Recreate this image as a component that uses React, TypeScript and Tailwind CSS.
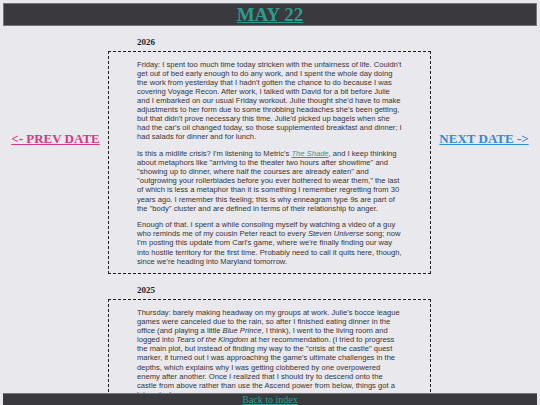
const serif = "font-['Liberation_Serif','Times_New_Roman',serif]";
const sans = "font-['Liberation_Sans',Arial,sans-serif]";

type Entry = { year: string; paragraphs: React.ReactNode[] };

const entries: Entry[] = [
  {
    year: '2026',
    paragraphs: [
      <>
        Friday: I spent too much time today stricken with the unfairness of life. Couldn't get out of bed early
        enough to do any work, and I spent the whole day doing the work from yesterday that I hadn't gotten the
        chance to do because I was covering Voyage Recon. After work, I talked with David for a bit before Julie
        and I embarked on our usual Friday workout. Julie thought she'd have to make adjustments to her form due to
        some throbbing headaches she's been getting, but that didn't prove necessary this time. Julie'd picked up
        bagels when she had the car's oil changed today, so those supplemented breakfast and dinner; I had salads
        for dinner and for lunch.
      </>,
      <>
        Is this a midlife crisis? I'm listening to Metric's{' '}
        <a href="#" className="italic text-[#2a9d8f] underline">
          The Shade
        </a>
        , and I keep thinking about metaphors like "arriving to the theater two hours after showtime" and "showing
        up to dinner, where half the courses are already eaten" and "outgrowing your rollerblades before you ever
        bothered to wear them," the last of which is less a metaphor than it is something I remember regretting
        from 30 years ago. I remember this feeling; this is why enneagram type 9s are part of the "body" cluster
        and are defined in terms of their relationship to anger.
      </>,
      <>
        Enough of that. I spent a while consoling myself by watching a video of a guy who reminds me of my cousin
        Peter react to every <i>Steven Universe</i> song; now I'm posting this update from Carl's game, where we're
        finally finding our way into hostile territory for the first time. Probably need to call it quits here,
        though, since we're heading into Maryland tomorrow.
      </>,
    ],
  },
  {
    year: '2025',
    paragraphs: [
      <>
        Thursday: barely making headway on my groups at work. Julie's bocce league games were canceled due to the
        rain, so after I finished eating dinner in the office (and playing a little <i>Blue Prince</i>, I think), I
        went to the living room and logged into <i>Tears of the Kingdom</i> at her recommendation. (I tried to
        progress the main plot, but instead of finding my way to the "crisis at the castle" quest marker, it turned
        out I was approaching the game's ultimate challenges in the depths, which explains why I was getting
        clobbered by one overpowered enemy after another. Once I realized that I should try to descend onto the
        castle from above rather than use the Ascend power from below, things got a lot easier.)
      </>,
    ],
  },
];

function DayEntry({ entry }: { entry: Entry }) {
  return (
    <section>
      <h2 className={`${serif} mt-[11px] mb-[4px] ml-[29px] text-[9px] leading-[10px] font-bold text-[#1f1f1f]`}>
        {entry.year}
      </h2>
      <div className={`${sans} border border-dashed border-[#1e1e1e] px-[28px] text-[7.6px] leading-[9.1px] text-[#363636]`}>
        {entry.paragraphs.map((p, i) => (
          <p key={i} className="my-[7.6px]">
            {p}
          </p>
        ))}
      </div>
    </section>
  );
}

export default function App() {
  return (
    <div className="min-h-screen bg-[#e9e8ed] px-[3px] pt-[3px] pb-[40px]">
      {/* Title bar */}
      <header className="flex h-[23px] items-center justify-center border border-[#76767b] bg-[#3a3a3e]">
        <a href="#" className={`${serif} text-[19px] leading-[22px] font-bold text-[#2a9d8f] underline`}>
          MAY 22
        </a>
      </header>

      <main className="grid grid-cols-[105px_323px_1fr]">
        <div className="flex justify-center pt-[105px]">
          <a href="#" className={`${serif} h-fit text-[13px] leading-[15px] font-bold text-[#d13b86] underline`}>
            &lt;- PREV DATE
          </a>
        </div>

        <div>
          {entries.map((e) => (
            <DayEntry key={e.year} entry={e} />
          ))}
        </div>

        <div className="flex justify-center pt-[105px]">
          <a href="#" className={`${serif} h-fit text-[13px] leading-[15px] font-bold text-[#2f8bd4] underline`}>
            NEXT DATE -&gt;
          </a>
        </div>
      </main>

      {/* Pinned footer */}
      <footer className="fixed right-[3px] bottom-0 left-[3px] flex h-[12px] items-start justify-center border-t border-[#76767b] bg-[#3a3a3e]">
        <a href="#" className={`${serif} -mt-[1px] text-[10px] leading-[13px] text-[#2a9d8f] underline`}>
          Back to index
        </a>
      </footer>
    </div>
  );
}
